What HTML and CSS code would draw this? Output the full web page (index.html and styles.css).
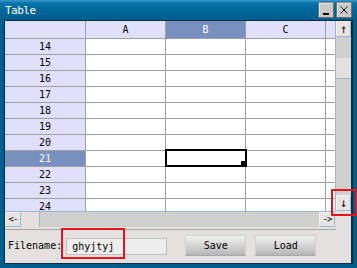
FILE: index.html
```html
<!DOCTYPE html>
<html>
<head>
    <link rel="stylesheet" href="styles.css">
</head>
<body>
    <div class="window">
        <!-- Title bar -->
        <div class="titlebar">
            <span class="title">Table</span>
            <div class="title-buttons">
                <button class="tbtn" title="Minimize">
                    <svg width="14" height="14" viewBox="0 0 14 14"><rect x="4" y="10" width="6" height="2" fill="#000"/></svg>
                </button>
                <button class="tbtn" title="Close">
                    <svg width="14" height="14" viewBox="0 0 14 14"><path d="M3.5 3.5 L10.5 10.5 M10.5 3.5 L3.5 10.5" stroke="#000" stroke-width="1" fill="none"/></svg>
                </button>
            </div>
        </div>

        <div class="client">
            <!-- Spreadsheet -->
            <div class="sheet">
                <div class="viewport">
                    <table class="grid">
                        <thead>
                            <tr>
                                <th class="corner-cell"></th>
                                <th>A</th>
                                <th class="active">B</th>
                                <th>C</th>
                                <th></th>
                            </tr>
                        </thead>
                        <tbody>
                            <tr><th>14</th><td></td><td></td><td></td><td></td></tr>
                            <tr><th>15</th><td></td><td></td><td></td><td></td></tr>
                            <tr><th>16</th><td></td><td></td><td></td><td></td></tr>
                            <tr><th>17</th><td></td><td></td><td></td><td></td></tr>
                            <tr><th>18</th><td></td><td></td><td></td><td></td></tr>
                            <tr><th>19</th><td></td><td></td><td></td><td></td></tr>
                            <tr><th>20</th><td></td><td></td><td></td><td></td></tr>
                            <tr><th class="active">21</th><td></td><td class="sel"></td><td></td><td></td></tr>
                            <tr><th>22</th><td></td><td></td><td></td><td></td></tr>
                            <tr><th>23</th><td></td><td></td><td></td><td></td></tr>
                            <tr><th>24</th><td></td><td></td><td></td><td></td></tr>
                        </tbody>
                    </table>
                </div>
                <div class="vscroll">
                    <div class="sbtn arrow">&#8593;</div>
                    <div class="vtrack"><div class="vthumb"></div></div>
                    <div class="sbtn arrow">&#8595;</div>
                </div>
            </div>
            <div class="hrow">
                <div class="hscroll">
                    <div class="sbtn wide">&lt;-</div>
                    <div class="hthumb"></div>
                    <div class="htrack"></div>
                    <div class="sbtn wide">-&gt;</div>
                </div>
                <div class="scroll-corner"></div>
            </div>

            <!-- Filename panel -->
            <div class="panel">
                <div class="form">
                    <label for="filename">Filename:</label>
                    <input type="text" id="filename" value="ghyjtyj">
                    <button class="btn save">Save</button>
                    <button class="btn">Load</button>
                </div>
                <div class="mark mark-file"></div>
            </div>
        </div>

        <div class="mark mark-down"></div>
    </div>
</body>
</html>
```

FILE: styles.css
```css
body {
    margin: 0;
    width: 357px;
    height: 268px;
    overflow: hidden;
    font-family: "DejaVu Sans Mono", "Liberation Mono", monospace;
    font-size: 10px;
    color: #000;
}

.window {
    position: relative;
    width: 357px;
    height: 268px;
    display: flex;
    flex-direction: column;
    background: #005e8d;
}

/* Title bar */
.titlebar {
    height: 20px;
    flex: none;
    display: flex;
    align-items: center;
    justify-content: space-between;
    padding: 0 5px 0 5px;
    background: linear-gradient(to bottom, #3a98cc 0, #0a74aa 3px, #00669a 10px, #005e8d 20px);
    color: #fff;
}

.title {
    font-size: 11px;
    letter-spacing: -0.5px;
    padding-top: 1px;
}

.title-buttons {
    display: flex;
    gap: 2px;
}

.tbtn {
    width: 16px;
    height: 16px;
    padding: 0;
    margin: 0;
    display: flex;
    align-items: center;
    justify-content: center;
    background: #c9c9c9;
    border: 1px solid #6e6e6e;
    border-top-color: #8a8a8a;
    box-shadow: inset 1px 1px 0 #e6e6e6;
}

/* Client area */
.client {
    position: relative;
    flex: 1;
    margin: 0 4px 4px 4px;
    border: 1px solid #0b2d42;
    border-right-width: 2px;
    background: #e4e0e0;
    display: flex;
    flex-direction: column;
    overflow: hidden;
}

.sheet {
    display: flex;
    height: 190px;
    flex: none;
}

.viewport {
    width: 330px;
    height: 190px;
    overflow: hidden;
    background: #fff;
}

.grid {
    border-collapse: separate;
    border-spacing: 0;
    table-layout: fixed;
    width: 401px;
}

.grid th,
.grid td {
    padding: 0;
    width: 79px;
    height: 15px;
    border-right: 1px solid #a0a0a0;
    border-bottom: 1px solid #a0a0a0;
    text-align: center;
    font-weight: normal;
    line-height: 15px;
}

.grid th {
    background: #e0e0fc;
}

.grid thead th {
    height: 17px;
    line-height: 17px;
}

.grid .corner-cell,
.grid tbody th {
    width: 80px;
}

.grid th.active {
    background: #7890c0;
    color: #fff;
}

.grid td {
    background: #fff;
}

.grid td.sel {
    position: relative;
}

.grid td.sel::before {
    content: "";
    position: absolute;
    left: -1px;
    top: -2px;
    right: -2px;
    bottom: -1px;
    border: 2px solid #000;
}

.grid td.sel::after {
    content: "";
    position: absolute;
    right: -1px;
    bottom: 0;
    width: 5px;
    height: 5px;
    background: #000;
}

/* Scrollbars */
.vscroll {
    width: 15px;
    border-left: 1px solid #9db6d0;
    display: flex;
    flex-direction: column;
    background: #cfd0ce;
}

.sbtn {
    box-sizing: border-box;
    width: 15px;
    height: 16px;
    flex: none;
    display: flex;
    align-items: center;
    justify-content: center;
    background: #e8e4e4;
    border: 1px solid #9db6d0;
    border-top-color: #f4f2f2;
    border-left-color: #f4f2f2;
    font-size: 10px;
    line-height: 1;
}

.sbtn.arrow {
    font-size: 12px;
}

.vtrack {
    flex: 1;
    padding-top: 21px;
}

.vthumb {
    height: 20px;
    background: #e4e0e0;
    border-bottom: 1px solid #9db6d0;
}

.hrow {
    display: flex;
    height: 16px;
    flex: none;
}

.hscroll {
    width: 330px;
    display: flex;
    background: #cfd0ce;
    border-top: 1px solid #9db6d0;
}

.sbtn.wide {
    width: 16px;
    height: 15px;
    font-size: 9px;
    letter-spacing: -1px;
}

.hthumb {
    width: 18px;
    background: #e4e0e0;
    border-right: 1px solid #9db6d0;
}

.htrack {
    flex: 1;
}

.scroll-corner {
    flex: 1;
    background: #e4e0e0;
}

/* Bottom panel */
.panel {
    position: relative;
    flex: 1;
    padding-top: 2px;
}

.form {
    width: 331px;
    height: 32px;
    border-top: 1px solid #a4a4a4;
    display: flex;
    align-items: center;
    padding-left: 3px;
    box-sizing: border-box;
}

label {
    font-size: 10px;
}

input[type="text"] {
    box-sizing: border-box;
    width: 101px;
    height: 17px;
    margin: 1px 0 0 4px;
    padding: 0 0 0 5px;
    border: 1px solid #c0c0c0;
    background: #ededed;
    font-family: inherit;
    font-size: 10px;
    outline: none;
}

.btn {
    box-sizing: border-box;
    width: 61px;
    height: 21px;
    margin: 0 0 0 9px;
    padding: 0;
    border: 1px solid #d0d0d0;
    border-bottom-color: #a8a8a8;
    background: linear-gradient(to bottom, #f2f2f2, #b6b6b6);
    font-family: inherit;
    font-size: 10px;
    color: #000;
}

.btn.save {
    margin-left: 18px;
}

/* Annotation marks */
.mark {
    position: absolute;
    box-sizing: border-box;
    border: 2px solid #e3141b;
}

.mark-file {
    left: 56px;
    top: 1px;
    width: 64px;
    height: 31px;
}

.mark-down {
    left: 331px;
    top: 189px;
    width: 26px;
    height: 27px;
}
```
